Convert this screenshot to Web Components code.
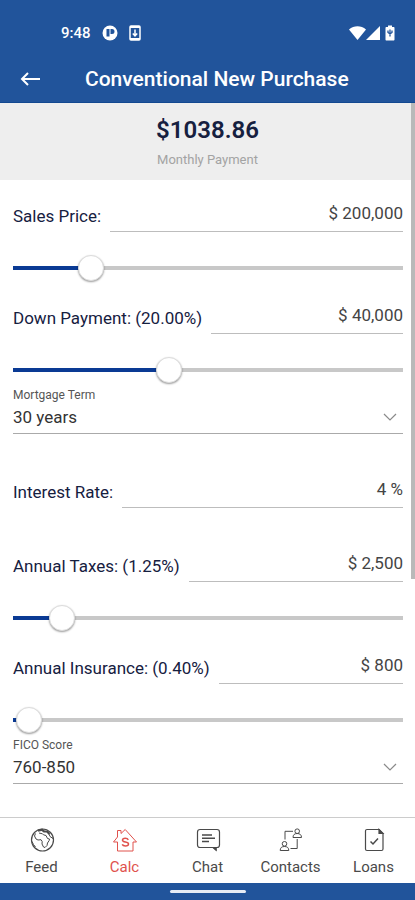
<!DOCTYPE html>
<html lang="en">
<head>
<meta charset="utf-8">
<meta name="viewport" content="width=device-width, initial-scale=1">
<title>Conventional New Purchase</title>
<style>
html,body{
    height:100%;
    margin:0
}
body{
    display:flex;
    flex-direction:column;
    font-family:Roboto,"Liberation Sans",sans-serif;
    color:#16203f;
    background:#fff;
    --brand:#21549b;
    --accent:#0a3a94;
    --line:#bdbdbd;
    --value:#444;
}
</style>
</head>
<body>
<status-bar time="9:48"></status-bar>
<app-toolbar>Conventional New Purchase</app-toolbar>
<calc-page>
    <payment-summary slot="summary" amount="$1038.86">Monthly Payment</payment-summary>
    <amount-field label="Sales Price:" value="$ 200,000" position="20"></amount-field>
    <amount-field label="Down Payment: (20.00%)" value="$ 40,000" position="40"></amount-field>
    <select-field label="Mortgage Term" options="30 years,20 years,15 years"></select-field>
    <amount-field class="spaced" label="Interest Rate:" value="4 %"></amount-field>
    <amount-field class="spaced" label="Annual Taxes: (1.25%)" value="$ 2,500" position="12.5"></amount-field>
    <amount-field label="Annual Insurance: (0.40%)" value="$ 800" position="4"></amount-field>
    <select-field label="FICO Score" options="760-850,700-759,640-699"></select-field>
</calc-page>
<tab-bar>
    <tab-item href="#feed" label="Feed">
        <svg viewBox="0 0 26 26" width="26" height="26" fill="none" stroke="currentColor">
            <circle cx="13.500" cy="13" r="11" stroke-width="1.200"/>
            <path d="M6.500 6.500 5.500 9l1.500 3 2 1 3-.3 1.200 1.800-.2 2.500 1.500 3 1.500.5 2-2 .5-2.500 1.700-2.500.3-1.500-2-.5-1.500-3-2.500-.7-1-1L10 6"/>
            <path stroke-width="2.200" d="M9 3.800l4-1 2 1.500 3 .2 2.500 2.500"/>
            <path d="M20 7l1 2.500 3 2M3 14.500l1.500 3 2 2.500"/>
        </svg>
    </tab-item>
    <tab-item href="#calc" label="Calc" active>
        <svg viewBox="0 0 26 26" width="26" height="26" fill="none" stroke="currentColor">
            <path d="M5.500 24V15H1.500L5.500 10V3.500H9V6.500L13.200 2.500 24.500 15H21V24z"/>
            <path stroke-width="1.500" d="M16.300 12.800c-.5-1-1.500-1.500-3-1.500-1.700 0-2.800.7-2.800 1.900 0 2.500 6 1.200 6 3.800 0 1.300-1.300 2-3.100 2-1.600 0-2.700-.5-3.200-1.600"/>
        </svg>
    </tab-item>
    <tab-item href="#chat" label="Chat">
        <svg viewBox="0 0 26 26" width="26" height="26" fill="none" stroke="currentColor" stroke-width="1.200">
            <path d="M5 2.500h17c1.500 0 2.500 1 2.500 2.500v13c0 1.500-1 2.500-2.500 2.500h-1V23l-3-2.500H5c-1.500 0-2.500-1-2.500-2.500V5c0-1.500 1-2.500 2.500-2.500z"/>
            <path stroke-width="1.500" d="M7 8h10M7 11.200h13M7 14.400h7"/>
            <path d="M18.500 20.500 21 23v-2.500z" fill="currentColor"/>
        </svg>
    </tab-item>
    <tab-item href="#contacts" label="Contacts">
        <svg viewBox="0 0 26 26" width="26" height="26" fill="none" stroke="currentColor">
            <circle cx="19.200" cy="4.200" r="2.300"/>
            <path d="M15 10.500c0-2.700 1.500-4 4.200-4s4.300 1.300 4.300 4z"/>
            <circle cx="6.500" cy="16.800" r="2.300"/>
            <path d="M2.200 23.500c0-2.700 1.500-4 4.300-4s4.300 1.300 4.300 4z"/>
            <path d="M15 4.300H7v8.200M12.500 21.500h6.700v-9.500"/>
        </svg>
    </tab-item>
    <tab-item href="#loans" label="Loans">
        <svg viewBox="0 0 26 26" width="26" height="26" fill="none" stroke="currentColor" stroke-width="1.200">
            <path d="M6 2.500h12L22 6.500v15.500c0 .8-.7 1.500-1.500 1.500H6c-.8 0-1.500-.7-1.500-1.500V4c0-.8.700-1.500 1.500-1.500z"/>
            <path d="M18 2.500v4h4z" fill="currentColor"/>
            <path stroke-width="1.500" d="M9.500 14.500l2.500 2.500 5-5.500"/>
        </svg>
    </tab-item>
</tab-bar>
<home-indicator></home-indicator>

<script>
class StatusBar extends HTMLElement{
    constructor(){
        super()
        this._shadowRoot=this.attachShadow({mode:'open'})
    }
    connectedCallback(){
        this._shadowRoot.innerHTML=`
            <style>
            :host{
                display:flex;
                align-items:center;
                justify-content:space-between;
                height:46px;
                padding:10px 18px 0 61px;
                color:#fff;
                background:var(--brand);
            }
            div{
                display:flex;
                align-items:center
            }
            .left{ gap:11px }
            .time{
                font-size:15px;
                font-weight:500
            }
            svg{ display:block }
            </style>
            <div class="left">
                <span class="time">${this.getAttribute('time')}</span>
                <svg width="16" height="16" viewBox="0 0 16 16">
                    <circle cx="8" cy="8" r="7.500" fill="#fff"/>
                    <path d="M4.500 4h3v7.500h-3zM8.500 4h1.500a2.500 2.500 0 0 1 0 5H8.500z" fill="#21549b"/>
                </svg>
                <svg width="12" height="16" viewBox="0 0 12 16">
                    <rect x="1" y="1" width="10" height="14" rx="1" fill="none" stroke="#fff" stroke-width="1.500"/>
                    <path d="M1 1h10v2H1zM1 13h10v2H1z" fill="#fff"/>
                    <path d="M6 4.500v6M3.800 8.500 6 10.800l2.200-2.300" fill="none" stroke="#fff" stroke-width="1.500"/>
                </svg>
            </div>
            <div>
                <svg width="17" height="14" viewBox="0 0 17 14"><path d="M0 3.500C5-.8 12-.8 17 3.500L8.500 14z" fill="#fff"/></svg>
                <svg width="15" height="14" viewBox="0 0 15 14"><path d="M0 14 14 0v14z" fill="#fff"/></svg>
                <svg width="16" height="16" viewBox="0 0 16 16">
                    <path d="M5.500 2H7V.5h4V2h1.500c.6 0 1 .4 1 1v11.500c0 .6-.4 1-1 1h-7c-.6 0-1-.4-1-1V3c0-.6.400-1 1-1z" fill="#fff"/>
                    <path d="M9 4.500v7M7 5.500v2l2 1.500 2-1.500v-2" fill="none" stroke="#21549b" stroke-width="1.300"/>
                </svg>
            </div>
        `
    }
}
window.customElements.define('status-bar',StatusBar)

class AppToolbar extends HTMLElement{
    constructor(){
        super()
        this._shadowRoot=this.attachShadow({mode:'open'})
    }
    connectedCallback(){
        this._shadowRoot.innerHTML=`
            <style>
            :host{
                display:grid;
                grid-template-columns:60px 1fr;
                align-items:center;
                height:46px;
                border-bottom:1px solid #124890;
                color:#fff;
                background:var(--brand);
            }
            button{
                display:flex;
                justify-content:center;
                border:0;
                padding:0;
                color:inherit;
                background:none
            }
            h1{
                margin:0;
                padding-left:25px;
                font-size:21px;
                font-weight:500;
                line-height:28px;
                white-space:nowrap
            }
            </style>
            <button type="button" aria-label="Back">
                <svg width="20" height="14" viewBox="0 0 20 14" fill="none" stroke="currentColor" stroke-width="2"><path d="M20 7H2M8 1 2 7l6 6"/></svg>
            </button>
            <h1><slot></slot></h1>
        `
    }
}
window.customElements.define('app-toolbar',AppToolbar)

class CalcPage extends HTMLElement{
    constructor(){
        super()
        this._shadowRoot=this.attachShadow({mode:'open'})
    }
    connectedCallback(){
        this._shadowRoot.innerHTML=`
            <style>
            :host{
                display:flex;
                flex:1;
                min-height:0;
                position:relative
            }
            main{
                flex:1;
                min-width:0;
                overflow-x:hidden;
                overflow-y:auto;
                scrollbar-width:none
            }
            form{ padding:0 12px 0 13px }
            ::slotted(.spaced){ margin-top:22px }
            .scroll{
                position:absolute;
                top:0;
                right:0;
                width:4px;
                height:66.6%;
                background:#b9b9b9
            }
            </style>
            <main>
                <slot name="summary"></slot>
                <form><slot></slot></form>
            </main>
            <div class="scroll"></div>
        `
    }
}
window.customElements.define('calc-page',CalcPage)

class PaymentSummary extends HTMLElement{
    constructor(){
        super()
        this._shadowRoot=this.attachShadow({mode:'open'})
    }
    connectedCallback(){
        this._shadowRoot.innerHTML=`
            <style>
            :host{
                display:flex;
                flex-direction:column;
                gap:7px;
                padding:12px 0;
                text-align:center;
                background:#eee
            }
            .amount{
                font-size:24px;
                font-weight:600;
                line-height:30px
            }
            .caption{
                font-size:13px;
                line-height:16px;
                color:#a3a3a3
            }
            </style>
            <div class="amount">${this.getAttribute('amount')}</div>
            <div class="caption"><slot></slot></div>
        `
    }
}
window.customElements.define('payment-summary',PaymentSummary)

class AmountField extends HTMLElement{
    constructor(){
        super()
        this._shadowRoot=this.attachShadow({mode:'open'})
    }
    connectedCallback(){
        this.label=this.getAttribute('label')
        this.position=this.getAttribute('position')
        this._shadowRoot.innerHTML=`
            <style>
            :host{ display:block }
            .row{
                display:flex;
                align-items:flex-end;
                gap:9px;
                height:52px
            }
            label{
                margin-bottom:4px;
                font-size:17px;
                line-height:24px;
                white-space:nowrap
            }
            #amount{
                flex:1;
                min-width:0;
                box-sizing:border-box;
                height:36px;
                border:0;
                border-bottom:1px solid var(--line);
                padding:0 0 2px;
                font:inherit;
                font-size:17px;
                text-align:right;
                color:var(--value);
                background:none;
                outline:0
            }
            .track{
                display:flex;
                margin:0 -13px;
                padding:23px 0 1px
            }
            #slider{
                -webkit-appearance:none;
                appearance:none;
                flex:1;
                min-width:0;
                height:26px;
                margin:0;
                background:linear-gradient(to right,var(--accent) var(--fill),#c8c8c8 var(--fill)) center / calc(100% - 26px) 4px no-repeat;
                outline:0
            }
            #slider::-webkit-slider-thumb{
                -webkit-appearance:none;
                box-sizing:border-box;
                width:26px;
                height:26px;
                border:1px solid #ddd;
                border-radius:50%;
                background:#fff;
                box-shadow:0 1px 2px rgba(0,0,0,.4)
            }
            </style>
            <div class="row">
                <label for="amount">${this.label}</label>
                <input id="amount" type="text" value="${this.getAttribute('value')}">
            </div>
            ${this.position?`<div class="track"><input id="slider" type="range" min="0" max="100" step="0.5" value="${this.position}" aria-label="${this.label}"></div>`:''}
        `
        const slider=this._shadowRoot.getElementById('slider')
        if(slider){
            const fill=()=>slider.style.setProperty('--fill',slider.value+'%')
            slider.addEventListener('input',fill)
            fill()
        }
    }
    //getter
    get value(){
        return this._shadowRoot.getElementById('amount').value
    }
}
window.customElements.define('amount-field',AmountField)

class SelectField extends HTMLElement{
    constructor(){
        super()
        this._shadowRoot=this.attachShadow({mode:'open'})
    }
    connectedCallback(){
        const options=this.getAttribute('options').split(',')
        this._shadowRoot.innerHTML=`
            <style>
            :host{
                display:grid;
                grid-template-columns:1fr 20px;
                row-gap:2px;
                align-items:center;
                padding:3px 0 4px;
                border-bottom:1px solid #aaa
            }
            label{
                grid-column:1 / -1;
                font-size:12px;
                line-height:16px;
                color:#555
            }
            select{
                grid-area:2 / 1 / 3 / 3;
                -webkit-appearance:none;
                appearance:none;
                height:24px;
                border:0;
                padding:0;
                font:inherit;
                font-size:17px;
                color:#333;
                background:none;
                outline:0
            }
            svg{
                grid-area:2 / 2 / 3 / 3;
                pointer-events:none
            }
            </style>
            <label for="choice">${this.getAttribute('label')}</label>
            <select id="choice">${options.map(o=>`<option>${o}</option>`).join('')}</select>
            <svg width="14" height="8" viewBox="0 0 14 8" fill="none" stroke="#8a8a8a" stroke-width="1.200"><path d="M1 1l6 6 6-6"/></svg>
        `
    }
    get value(){
        return this._shadowRoot.getElementById('choice').value
    }
}
window.customElements.define('select-field',SelectField)

class TabBar extends HTMLElement{
    constructor(){
        super()
        this._shadowRoot=this.attachShadow({mode:'open'})
    }
    connectedCallback(){
        this._shadowRoot.innerHTML=`
            <style>
            :host{
                display:block;
                border-top:1px solid #ccc;
                background:#fff
            }
            nav{
                display:grid;
                grid-auto-flow:column;
                grid-auto-columns:1fr
            }
            </style>
            <nav><slot></slot></nav>
        `
    }
}
window.customElements.define('tab-bar',TabBar)

class TabItem extends HTMLElement{
    constructor(){
        super()
        this._shadowRoot=this.attachShadow({mode:'open'})
    }
    connectedCallback(){
        this._shadowRoot.innerHTML=`
            <style>
            :host{
                display:block;
                color:#4a4a4a
            }
            :host([active]){ color:#e0524d }
            a{
                display:flex;
                flex-direction:column;
                align-items:center;
                gap:4px;
                padding:9px 0 6px;
                font-size:15px;
                line-height:20px;
                color:inherit;
                text-decoration:none
            }
            ::slotted(svg){ display:block }
            </style>
            <a href="${this.getAttribute('href')}"><slot></slot><span>${this.getAttribute('label')}</span></a>
        `
    }
}
window.customElements.define('tab-item',TabItem)

class HomeIndicator extends HTMLElement{
    constructor(){
        super()
        this._shadowRoot=this.attachShadow({mode:'open'})
    }
    connectedCallback(){
        this._shadowRoot.innerHTML=`
            <style>
            :host{
                display:flex;
                align-items:center;
                justify-content:center;
                height:17px;
                background:var(--brand)
            }
            div{
                width:76px;
                height:3px;
                border-radius:2px;
                background:#e6ecf5
            }
            </style>
            <div></div>
        `
    }
}
window.customElements.define('home-indicator',HomeIndicator)
</script>
</body>
</html>
